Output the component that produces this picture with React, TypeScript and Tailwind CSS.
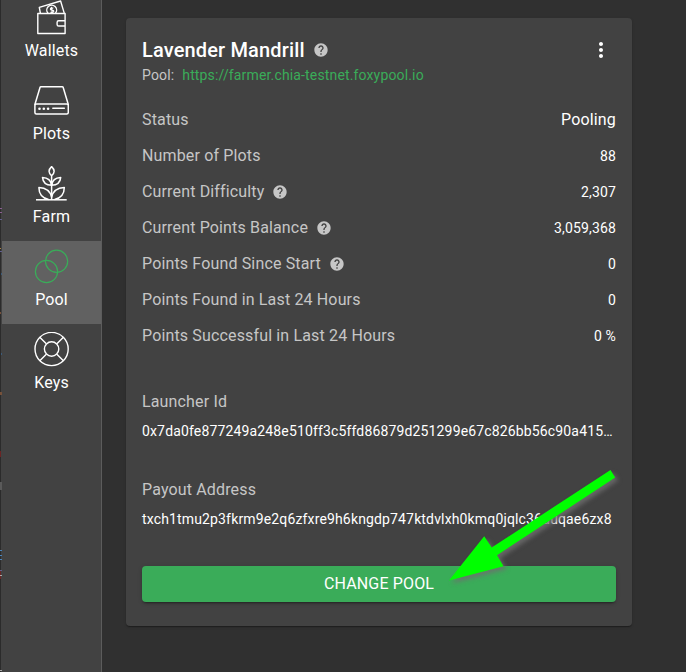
import React from "react";

const WalletIcon = () => (
  <svg className="block h-[36px] w-[36px]" viewBox="0 0 36 36" fill="none" stroke="white" strokeWidth="1.4" strokeLinejoin="round">
    <path d="M4.800 13.500h27.300v20H4.800zM32.100 20.800h-6.400q-1.600 0-1.600 1.600v2q0 1.600 1.600 1.600h6.400" />
    <path d="M7.400 13.400 6.300 7.400 27.600 1l3.700 12.400" />
    <path d="M15.100 13.400a4.900 4.900 0 1 1 7.200 0" />
    <path d="M20.300 8.300c-1.200-.9-3-.4-2.900.8.1 1.400 3.300.5 3.400 2 .1 1.400-2.100 1.700-3.300.8M18.300 6.800l1.100 6" strokeWidth="1.200" />
  </svg>
);

const PlotsIcon = () => (
  <svg className="block h-[36px] w-[36px]" viewBox="0 0 36 36" fill="none" stroke="white" strokeWidth="1.500" strokeLinejoin="round" strokeLinecap="round">
    <path d="M1.900 21.500 7 4.500q.2-.7 1-.7h21.200q.8 0 1 .7L35.300 21.500" />
    <rect x="1.900" y="20.900" width="33.400" height="10" rx="1.500" />
    <path d="M19.800 25.200h11.500" />
    <g fill="white" stroke="none">
      <circle cx="6.500" cy="25.700" r="1.300" />
      <circle cx="10.800" cy="25.700" r="1.300" />
      <circle cx="15.100" cy="25.700" r="1.300" />
    </g>
  </svg>
);

const FarmIcon = () => (
  <svg className="block h-[36px] w-[36px]" viewBox="0 0 36 36" fill="none" stroke="white" strokeWidth="1.500" strokeLinejoin="round">
    <path d="M3 33.800h30.700" />
    <path d="M18.600 .6c-3.400 3.300-3.400 5.800 0 9.200 3.400-3.400 3.400-5.900 0-9.200zM18.600 9.800v23.600" />
    <path d="M18.600 19.200c-5.400 0-8.700-2.500-9.100-7.800 5.300.2 8.500 2.700 9.100 7.800zM18.600 19.200c5.400 0 8.700-2.500 9.100-7.800-5.300.2-8.500 2.700-9.100 7.800z" />
    <path d="M15.600 33.400C9 31.900 5.900 28.100 5.900 21.400c7 .3 11.400 3.500 12.700 9.800 1.300-6.300 5.700-9.500 12.700-9.800 0 6.700-3.100 10.500-9.700 12" />
  </svg>
);

const PoolIcon = () => (
  <svg className="block h-[36px] w-[36px]" viewBox="0 0 36 36" fill="none" stroke="#3aac59" strokeWidth="1.200">
    <circle cx="23.600" cy="12.300" r="11.100" />
    <circle cx="13.500" cy="22.500" r="11.100" />
  </svg>
);

const KeysIcon = () => (
  <svg className="block h-[36px] w-[36px]" viewBox="0 0 36 36" fill="none" stroke="white" strokeWidth="1.400">
    <circle cx="18.600" cy="17" r="16.600" />
    <circle cx="18.600" cy="17" r="7.200" />
    <path d="m6.800 5.300 6.500 6.500M30.400 5.300l-6.500 6.500M6.800 28.700l6.500-6.500M30.400 28.700l-6.500-6.500" />
  </svg>
);

const items = [
  { label: "Wallets", icon: <WalletIcon /> },
  { label: "Plots", icon: <PlotsIcon /> },
  { label: "Farm", icon: <FarmIcon /> },
  { label: "Pool", icon: <PoolIcon />, active: true },
  { label: "Keys", icon: <KeysIcon /> },
];

const HelpIcon = () => (
  <svg className="block h-4 w-4 shrink-0 fill-[#c6c6c6]" viewBox="0 0 24 24">
    <path d="M12 2C6.480 2 2 6.480 2 12s4.480 10 10 10 10-4.480 10-10S17.520 2 12 2zm1 17h-2v-2h2v2zm2.070-7.750l-.9.920C13.450 12.900 13 13.500 13 15h-2v-.5c0-1.100.45-2.100 1.170-2.830l1.240-1.260c.37-.36.59-.86.59-1.410 0-1.100-.9-2-2-2s-2 .9-2 2H8c0-2.210 1.790-4 4-4s4 1.790 4 4c0 .88-.36 1.680-.93 2.250z" />
  </svg>
);

const stats = [
  { label: "Status", value: "Pooling", large: true },
  { label: "Number of Plots", value: "88" },
  { label: "Current Difficulty", value: "2,307", help: true },
  { label: "Current Points Balance", value: "3,059,368", help: true },
  { label: "Points Found Since Start", value: "0", help: true },
  { label: "Points Found in Last 24 Hours", value: "0" },
  { label: "Points Successful in Last 24 Hours", value: "0 %" },
];

const Field = ({ label, value }: { label: string; value: string }) => (
  <div className="flex flex-col gap-[7px]">
    <div className="text-base leading-6 tracking-[0.00938em] text-[#c6c6c6]">{label}</div>
    <div className="text-sm leading-5 tracking-[0.01071em] whitespace-nowrap">{value}</div>
  </div>
);

export default function App() {
  return (
    <div className="relative flex h-[672px] w-[686px] overflow-hidden bg-[#303030] font-[Roboto,sans-serif] text-white">
      <div className="w-0.5 shrink-0 bg-[#424242]">
        <div className="h-full w-px bg-[#2b2b2b]" />
      </div>
      <nav className="-mt-2 flex w-[100px] shrink-0 flex-col border-r border-[#5c5c5c] bg-[#424242]">
        {items.map((item) => (
          <div
            key={item.label}
            className={
              item.active
                ? "flex h-[83px] shrink-0 flex-col items-center bg-[#616161] pt-2"
                : "flex h-[83px] shrink-0 flex-col items-center pt-2"
            }
          >
            <div className="mr-px">{item.icon}</div>
            <div className="mt-[3px] text-base leading-6 tracking-[0.00938em]">{item.label}</div>
          </div>
        ))}
      </nav>

      <main className="flex-1 pt-[18px] pl-6">
        <section className="flex h-[608px] w-[506px] flex-col rounded bg-[#424242] p-4 shadow-[0_2px_1px_-1px_rgba(0,0,0,0.2),0_1px_1px_rgba(0,0,0,0.14),0_1px_3px_rgba(0,0,0,0.12)]">
          <div className="flex justify-between">
            <div>
              <div className="flex items-center gap-2">
                <h6 className="text-xl leading-8 font-medium tracking-[0.0075em]">Lavender Mandrill</h6>
                <HelpIcon />
              </div>
              <div className="-mt-px flex gap-2 text-sm leading-5 tracking-[0.01071em]">
                <span className="text-[#c6c6c6]">Pool:</span>
                <span className="text-[#3aac59]">https://farmer.chia-testnet.foxypool.io</span>
              </div>
            </div>
            <svg className="mt-1 mr-[3px] block h-6 w-6 fill-white" viewBox="0 0 24 24">
              <path d="M12 8c1.100 0 2-.9 2-2s-.9-2-2-2-2 .9-2 2 .9 2 2 2zm0 2c-1.100 0-2 .9-2 2s.9 2 2 2 2-.9 2-2-.9-2-2-2zm0 6c-1.100 0-2 .9-2 2s.9 2 2 2 2-.9 2-2-.9-2-2-2z" />
            </svg>
          </div>

          <div className="mt-[23px] flex flex-col gap-3">
            {stats.map((s) => (
              <div key={s.label} className="flex h-6 items-center justify-between">
                <div className="flex items-center gap-2 text-base leading-6 tracking-[0.00938em] text-[#c6c6c6]">
                  {s.label}
                  {s.help && <HelpIcon />}
                </div>
                <div className={s.large ? "text-base tracking-[0.00938em]" : "text-sm tracking-[0.01071em]"}>{s.value}</div>
              </div>
            ))}
          </div>

          <div className="mt-[42px] flex flex-col gap-[37px]">
            <Field label="Launcher Id" value="0x7da0fe877249a248e510ff3c5ffd86879d251299e67c826bb56c90a415…" />
            <Field label="Payout Address" value="txch1tmu2p3fkrm9e2q6zfxre9h6kngdp747ktdvlxh0kmq0jqlc36duqae6zx8" />
          </div>

          <button className="mt-[37px] h-9 w-full shrink-0 rounded bg-[#3aac59] text-base leading-6 tracking-[0.00938em] uppercase shadow-[0_3px_1px_-2px_rgba(0,0,0,0.2),0_2px_2px_rgba(0,0,0,0.14),0_1px_5px_rgba(0,0,0,0.12)]">
            Change Pool
          </button>
        </section>
      </main>

      <svg className="pointer-events-none absolute top-[460px] left-[440px] h-[130px] w-[190px] drop-shadow-[3px_3px_2px_rgba(110,110,110,0.8)]" viewBox="440 460 190 130">
        <path fill="#00ff00" d="M449 580.500 484.200 536.300l7.500 11.200L610.500 470l4.700 7.500-118.200 77.700 6.500 11z" />
      </svg>

      <svg className="pointer-events-none absolute top-0 left-0 h-[672px] w-0.5" viewBox="0 0 2 672">
        <path fill="#8a5f91" d="M0 208h2v1H0zM0 212h2v1H0z" />
        <path fill="#62608f" d="M0 219h2v1H0zM0 251h2v1H0zM0 570h2v1H0z" />
        <path fill="#a98144" d="M0 248h1v1H0z" />
        <path fill="#6b2424" d="M0 451h1v6H0zM0 571h1v8H0z" />
        <path fill="#3c5b7a" d="M1 273h1v2H1zM1 353h1v2H1z" />
        <path fill="#76513a" d="M0 312h1v2H0zM0 392h2v3H0z" />
        <path fill="#4a85bd" d="M0 550h2v1H0zM0 555h2v1H0zM0 559h2v1H0z" />
        <path fill="#aaa" d="M0 575h2v1H0zM0 670h2v1H0z" />
        <path fill="#5a5a5a" d="M0 482h2v8H0z" />
      </svg>
    </div>
  );
}
